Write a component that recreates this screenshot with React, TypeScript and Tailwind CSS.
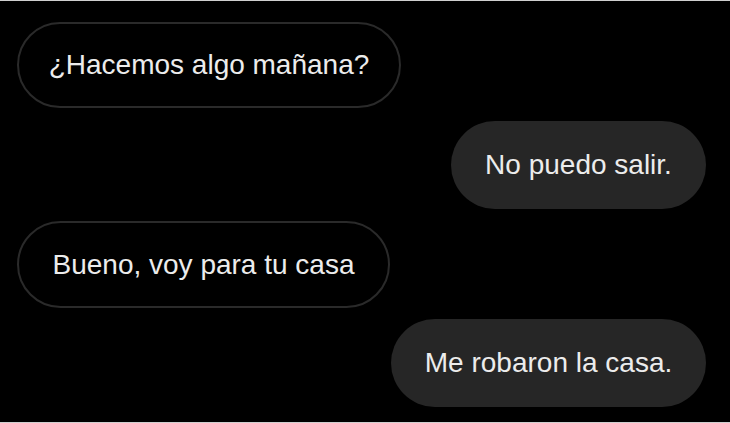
import React from "react";

const font = { fontFamily: '"Liberation Sans", Arial, sans-serif' };

export default function App() {
  return (
    <div className="w-[730px] h-[423px] bg-black border-t border-b border-[#cfcfcf] overflow-hidden" style={font}>
      <div className="flex flex-col pt-[21px] pl-[17px] pr-[24px]">
        <div className="self-start w-[384px] h-[86px] rounded-full border-2 border-[#2a2a2a] flex items-center justify-center text-[28px] text-[#ececec]">
          ¿Hacemos algo mañana?
        </div>
        <div className="self-end mt-[13px] w-[255px] h-[88px] rounded-full bg-[#262626] flex items-center justify-center text-[28px] text-[#ececec]">
          No puedo salir.
        </div>
        <div className="self-start mt-[12px] w-[373px] h-[87px] rounded-full border-2 border-[#2a2a2a] flex items-center justify-center text-[28px] text-[#ececec]">
          Bueno, voy para tu casa
        </div>
        <div className="self-end mt-[11px] w-[315px] h-[88px] rounded-full bg-[#262626] flex items-center justify-center text-[28px] text-[#ececec]">
          Me robaron la casa.
        </div>
      </div>
    </div>
  );
}
